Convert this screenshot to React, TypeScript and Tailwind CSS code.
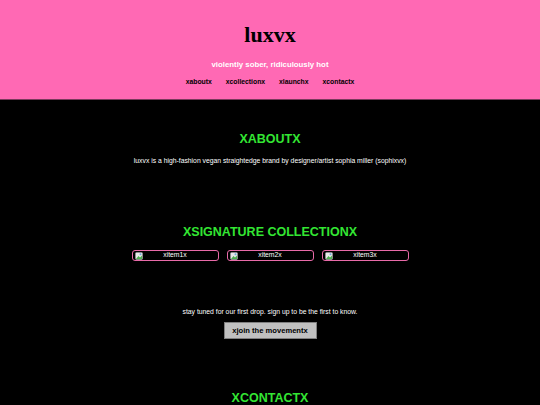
import React from "react";

function BrokenIcon() {
  return (
    <svg width="8" height="8" viewBox="0 0 8 8" className="absolute left-[2px] top-[1px]">
      <rect x="0.5" y="0.5" width="7" height="7" rx="1" fill="#e8e8e8" stroke="#9a9a9a" strokeWidth="0.6" />
      <path d="M1 7 L3.5 4 L5 5.5 L7 3.5 L7 7 Z" fill="#4caf50" />
      <circle cx="5.5" cy="2.3" r="1" fill="#6fa8dc" />
    </svg>
  );
}

function Item({ label }: { label: string }) {
  return (
    <div className="relative w-[87px] h-[11px] border-[1.5px] border-[#e86aa8] rounded-[3px] flex items-center justify-center text-white text-[6.8px] leading-none">
      <BrokenIcon />
      <span>{label}</span>
    </div>
  );
}

export default function App() {
  const sans = { fontFamily: '"Liberation Sans", Arial, sans-serif' };
  return (
    <div className="w-[540px] h-[405px] overflow-hidden bg-black" style={sans}>
      <header className="bg-[#ff69b4] h-[100px] pt-[22px] text-center border-b border-[#7a3a5c]">
        <h1
          className="text-[22px] leading-[26px] font-bold text-black"
          style={{ fontFamily: '"Liberation Serif", "Times New Roman", serif' }}
        >
          luxvx
        </h1>
        <p className="mt-[11px] text-[7.8px] leading-[12px] font-bold text-white">
          violently sober, ridiculously hot
        </p>
        <nav className="mt-[6px] flex justify-center gap-[14px] text-[6.8px] leading-[10px] font-bold text-black">
          <span>xaboutx</span>
          <span>xcollectionx</span>
          <span>xlaunchx</span>
          <span>xcontactx</span>
        </nav>
      </header>

      <section className="text-center pt-[31px]">
        <h2 className="text-[12.5px] leading-[16px] font-bold text-[#33e633]">XABOUTX</h2>
        <p className="mt-[9px] text-[6.8px] leading-[9px] text-white">
          luxvx is a high-fashion vegan straightedge brand by designer/artist sophia miller (sophixvx)
        </p>
      </section>

      <section className="text-center pt-[59px]">
        <h2 className="text-[12.5px] leading-[16px] font-bold text-[#33e633]">XSIGNATURE COLLECTIONX</h2>
        <div className="mt-[10px] flex justify-center gap-[8px]">
          <Item label="xitem1x" />
          <Item label="xitem2x" />
          <Item label="xitem3x" />
        </div>
      </section>

      <section className="text-center pt-[46px]">
        <p className="text-[6.8px] leading-[9px] text-white">
          stay tuned for our first drop. sign up to be the first to know.
        </p>
        <button className="mt-[6px] w-[93px] h-[17px] bg-[#c0c0c0] border border-[#7f7f7f] text-[7.6px] font-bold text-black leading-none">
          xjoin the movementx
        </button>
      </section>

      <section className="text-center pt-[50px]">
        <h2 className="text-[12.5px] leading-[16px] font-bold text-[#33e633]">XCONTACTX</h2>
      </section>
    </div>
  );
}
